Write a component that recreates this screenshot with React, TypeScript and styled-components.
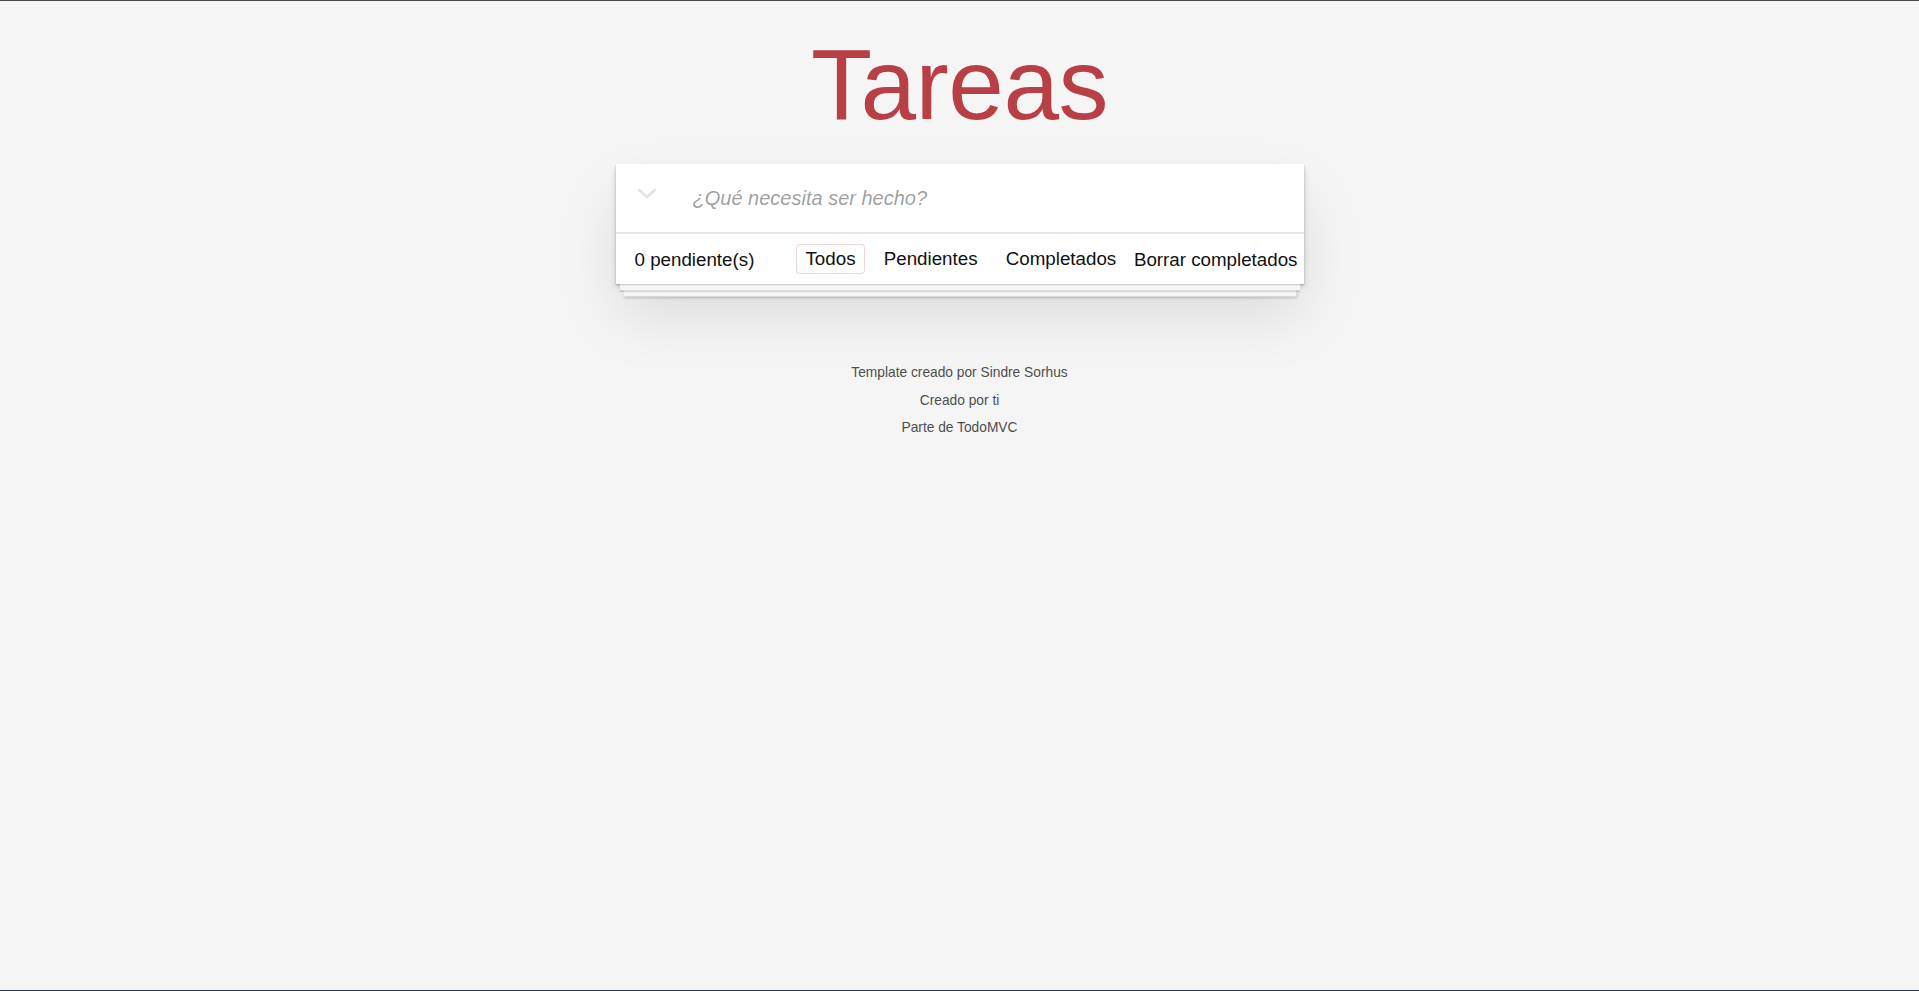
import React from "react";
import styled, { createGlobalStyle } from "styled-components";

const GlobalStyle = createGlobalStyle`
  html, body {
    margin: 0;
    padding: 0;
  }
  body {
    background: #f5f5f5;
    font-family: "Liberation Sans", Arial, Helvetica, sans-serif;
    color: #111111;
    -webkit-font-smoothing: antialiased;
  }
`;

const Page = styled.div`
  min-height: 100vh;
  box-sizing: border-box;
  border-top: 1px solid #4a4a4a;
  border-bottom: 1px solid #2b3743;
  display: flex;
  flex-direction: column;
  align-items: center;
`;

const Title = styled.h1`
  margin: 33px 0 0;
  font-size: 100px;
  line-height: 100px;
  font-weight: 200;
  color: #b83f45;
  text-align: center;
  letter-spacing: -0.5px;
`;

const Card = styled.section`
  margin-top: 30px;
  width: 688px;
  background: #ffffff;
  box-shadow:
    0 1.25px 1.25px rgba(0, 0, 0, 0.2),
    0 10px 0 -3.75px #f6f6f6,
    0 11.25px 1.25px -3.75px rgba(0, 0, 0, 0.2),
    0 20px 0 -7.5px #f6f6f6,
    0 21.25px 2.5px -7.5px rgba(0, 0, 0, 0.2),
    0 2.5px 5px 0 rgba(0, 0, 0, 0.2),
    0 31.25px 62.5px 0 rgba(0, 0, 0, 0.1);
`;

const Header = styled.header`
  display: flex;
  height: 68px;
  box-sizing: border-box;
`;

const ToggleArea = styled.label`
  flex: none;
  width: 77px;
  box-sizing: border-box;
  padding: 24px 0 0 21px;
  display: flex;
  align-items: flex-start;
`;

const NewTodo = styled.input`
  flex: 1;
  min-width: 0;
  border: none;
  outline: none;
  background: transparent;
  padding: 20px 16px 20px 0;
  font-family: "Liberation Sans", Arial, Helvetica, sans-serif;
  font-size: 20px;
  line-height: 28px;
  color: #111111;
  &::placeholder {
    font-style: italic;
    color: rgba(0, 0, 0, 0.4);
  }
`;

const Footer = styled.footer`
  display: flex;
  align-items: center;
  height: 50px;
  padding: 0 6px 0 19px;
  border-top: 2px solid #e6e6e6;
  font-size: 18.75px;
  line-height: 25px;
  color: #111111;
`;

const Count = styled.span`
  white-space: nowrap;
`;

const Filters = styled.ul`
  list-style: none;
  margin: 0 0 0 37px;
  padding: 0;
  display: flex;
`;

const FilterLink = styled.a<{ $selected?: boolean }>`
  display: block;
  margin: 0 5.1px;
  padding: 2.5px 8px;
  line-height: 22.5px;
  border: 1.25px solid ${(p) => (p.$selected ? "rgba(175, 47, 47, 0.2)" : "transparent")};
  border-radius: 3.75px;
  color: inherit;
  text-decoration: none;
  white-space: nowrap;
`;

const ClearButton = styled.button`
  margin-left: auto;
  padding: 0;
  border: 0;
  background: none;
  font: inherit;
  line-height: 25px;
  color: inherit;
  white-space: nowrap;
  cursor: pointer;
`;

const Info = styled.footer`
  margin-top: 82px;
  display: flex;
  flex-direction: column;
  gap: 13.75px;
  color: #4d4d4d;
  font-size: 13.75px;
  text-align: center;
  text-shadow: 0 1.25px 0 rgba(255, 255, 255, 0.5);
`;

const InfoLine = styled.p`
  margin: 0;
  line-height: 1;
`;

const InfoLink = styled.a`
  color: inherit;
  text-decoration: none;
`;

const Chevron = () => (
  <svg width="20" height="11" viewBox="0 0 20 11" aria-hidden="true">
    <polyline
      points="1.5,1.5 10,9 18.5,1.5"
      fill="none"
      stroke="#e3e3e3"
      strokeWidth="2.6"
      strokeLinecap="butt"
      strokeLinejoin="miter"
    />
  </svg>
);

export default function App() {
  return (
    <>
      <GlobalStyle />
      <Page>
        <Title>Tareas</Title>
        <Card>
          <Header>
            <ToggleArea>
              <Chevron />
            </ToggleArea>
            <NewTodo placeholder="¿Qué necesita ser hecho?" />
          </Header>
          <Footer>
            <Count>0 pendiente(s)</Count>
            <Filters>
              <li>
                <FilterLink href="#/" $selected>
                  Todos
                </FilterLink>
              </li>
              <li>
                <FilterLink href="#/active">Pendientes</FilterLink>
              </li>
              <li>
                <FilterLink href="#/completed">Completados</FilterLink>
              </li>
            </Filters>
            <ClearButton>Borrar completados</ClearButton>
          </Footer>
        </Card>
        <Info>
          <InfoLine>
            Template creado por <InfoLink href="#">Sindre Sorhus</InfoLink>
          </InfoLine>
          <InfoLine>
            Creado por <InfoLink href="#">ti</InfoLink>
          </InfoLine>
          <InfoLine>
            Parte de <InfoLink href="#">TodoMVC</InfoLink>
          </InfoLine>
        </Info>
      </Page>
    </>
  );
}
